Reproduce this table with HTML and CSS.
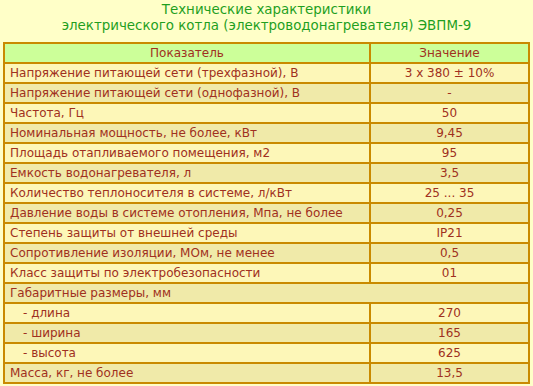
FILE: index.html
```html
<!DOCTYPE html>
<html>
<head>
<meta charset="utf-8">
<link rel="stylesheet" href="styles.css">
</head>
<body>
<div class="title">Технические характеристики<br>электрического котла (электроводонагревателя) ЭВПМ-9</div>
<table class="specs">
<tr class="head"><th class="c1">Показатель</th><th class="c2">Значение</th></tr>
<tr class="odd"><td>Напряжение питающей сети (трехфазной), В</td><td class="v">3 x 380 ± 10%</td></tr>
<tr class="even"><td>Напряжение питающей сети (однофазной), В</td><td class="v">-</td></tr>
<tr class="odd"><td>Частота, Гц</td><td class="v">50</td></tr>
<tr class="even"><td>Номинальная мощность, не более, кВт</td><td class="v">9,45</td></tr>
<tr class="odd"><td>Площадь отапливаемого помещения, м2</td><td class="v">95</td></tr>
<tr class="even"><td>Емкость водонагревателя, л</td><td class="v">3,5</td></tr>
<tr class="odd"><td>Количество теплоносителя в системе, л/кВт</td><td class="v">25 ... 35</td></tr>
<tr class="even"><td>Давление воды в системе отопления, Мпа, не более</td><td class="v">0,25</td></tr>
<tr class="odd"><td>Степень защиты от внешней среды</td><td class="v">IP21</td></tr>
<tr class="even"><td>Сопротивление изоляции, МОм, не менее</td><td class="v">0,5</td></tr>
<tr class="odd"><td>Класс защиты по электробезопасности</td><td class="v">01</td></tr>
<tr class="even"><td colspan="2">Габаритные размеры, мм</td></tr>
<tr class="odd"><td><span class="sub">- длина</span></td><td class="v">270</td></tr>
<tr class="even"><td><span class="sub">- ширина</span></td><td class="v">165</td></tr>
<tr class="odd"><td><span class="sub">- высота</span></td><td class="v">625</td></tr>
<tr class="even"><td>Масса, кг, не более</td><td class="v">13,5</td></tr>
</table>
</body>
</html>
```
FILE: styles.css
```css
html, body {
  margin: 0;
  padding: 0;
  background: #ffffc8;
}
body {
  padding: 0 3px;
  font-family: "DejaVu Sans", Verdana, sans-serif;
  font-size: 12px;
  color: #a03020;
}
.title {
  text-align: center;
  color: #1f9f1f;
  font-size: 13.4px;
  line-height: 16px;
  padding-top: 2px;
  height: 40px;
}
.specs {
  width: 527px;
  border-collapse: collapse;
  border: 2px solid #c98a00;
}
.specs th, .specs td {
  border: 2px solid #c98a00;
  height: 18px;
  padding: 0 0 0 5px;
  line-height: 18px;
  text-align: left;
  font-weight: normal;
  white-space: nowrap;
}
.specs th {
  text-align: center;
  padding: 0;
}
.specs .c1 { width: 364px; }
.specs td.v { text-align: center; padding: 0; }
.head { background: #ccff99; }
.odd { background: #fdf7b8; }
.even { background: #f0eaa9; }
.sub { padding-left: 13px; }
```
